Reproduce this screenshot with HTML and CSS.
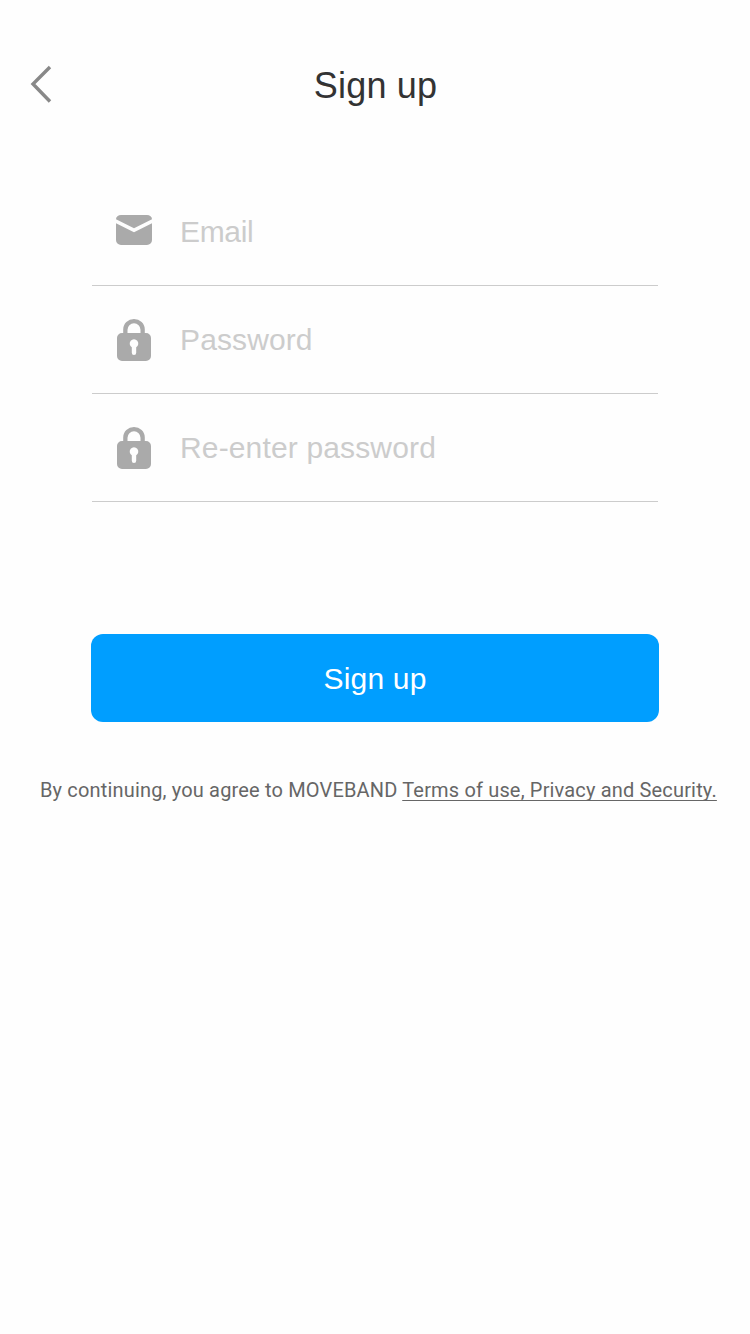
FILE: index.html
```html
<!DOCTYPE html>
<html lang="en">
<head>
<meta charset="utf-8">
<title>Sign up</title>
<link rel="stylesheet" href="styles.css">
</head>
<body>
<header class="bar">
  <svg class="back" width="22" height="38" viewBox="0 0 22 38"><path d="M20 2 3 19l17 17.500" /></svg>
  <h1 class="title">Sign up</h1>
</header>
<main>
  <form class="form">
    <label class="field">
      <svg class="icon" width="36" height="44" viewBox="0 0 36 44"><path d="M0 9.200a5 4.200 0 0 1 5-4.200h26a5 4.200 0 0 1 5 4.200L18 18.200ZM0 13.300 18 22.300l18-9V30a5 5 0 0 1-5 5H5a5 5 0 0 1-5-5Z"/></svg>
      <span class="hint hint-email">Email</span>
    </label>
    <label class="field">
      <svg class="icon" width="36" height="44" viewBox="0 0 36 44"><path fill-rule="evenodd" d="M7.200 15v-3.500a10.800 10.500 0 0 1 21.600 0V15H30a5 5 0 0 1 5 5v18a5 5 0 0 1-5 5H6a5 5 0 0 1-5-5V20a5 5 0 0 1 5-5ZM11.500 15h13v-3.200a6.500 6.500 0 0 0-13 0ZM15.800 29.300v5.500a2.200 2.200 0 0 0 4.400 0v-5.500a4.300 4.300 0 1 0-4.400 0Z"/></svg>
      <span class="hint hint-password">Password</span>
    </label>
    <label class="field">
      <svg class="icon" width="36" height="44" viewBox="0 0 36 44"><path fill-rule="evenodd" d="M7.200 15v-3.500a10.800 10.500 0 0 1 21.600 0V15H30a5 5 0 0 1 5 5v18a5 5 0 0 1-5 5H6a5 5 0 0 1-5-5V20a5 5 0 0 1 5-5ZM11.500 15h13v-3.200a6.500 6.500 0 0 0-13 0ZM15.800 29.300v5.500a2.200 2.200 0 0 0 4.400 0v-5.500a4.300 4.300 0 1 0-4.400 0Z"/></svg>
      <span class="hint hint-repeat">Re-enter password</span>
    </label>
    <button class="submit" type="button">Sign up</button>
  </form>
  <p class="terms">By continuing, you agree to MOVEBAND <a class="link" href="#">Terms of use, Privacy and Security.</a></p>
</main>
</body>
</html>
```
FILE: styles.css
```css
* { box-sizing: border-box; }
body {
  margin: 0;
  min-height: 1334px;
  background: #fefefe;
  font-family: "Liberation Sans", Arial, sans-serif;
}
.bar {
  display: grid;
  grid-template-columns: 60px 1fr 60px;
  align-items: center;
  height: 138px;
  padding: 40px 0 6px;
}
.back {
  margin: -4px 0 0 30px;
  fill: none;
  stroke: #888;
  stroke-width: 3.400;
}
.title {
  margin: 0;
  padding-left: 1px;
  text-align: center;
  color: #333;
  font-size: 36px;
  font-weight: 400;
  line-height: 44px;
  letter-spacing: 0.200px;
}
.form { margin: 0 91px; padding-top: 40px; }
.field {
  display: flex;
  align-items: center;
  gap: 28px;
  height: 108px;
  margin: 0 1px;
  padding-left: 24px;
  border-bottom: 1px solid #ccc;
}
.icon { flex: none; fill: #aaa; }
.hint {
  color: #ccc;
  font-size: 30px;
  line-height: 36px;
}
.hint-email { letter-spacing: -0.350px; }
.hint-password { letter-spacing: 0.120px; }
.hint-repeat { letter-spacing: 0.150px; }
.submit {
  display: block;
  width: 568px;
  height: 88px;
  margin-top: 132px;
  padding: 2px 0 0;
  border: 0;
  border-radius: 12px;
  background: #009eff;
  color: #fff;
  font: 30px/36px "Liberation Sans", Arial, sans-serif;
  letter-spacing: 0.200px;
}
.terms {
  margin: 54px 0 0 40px;
  color: #666;
  font: 20px/28px Roboto, sans-serif;
  letter-spacing: 0.163px;
  white-space: nowrap;
}
.link {
  color: inherit;
  text-decoration: underline;
  text-decoration-thickness: 1px;
  text-decoration-skip-ink: none;
  text-underline-offset: 3px;
}
```
